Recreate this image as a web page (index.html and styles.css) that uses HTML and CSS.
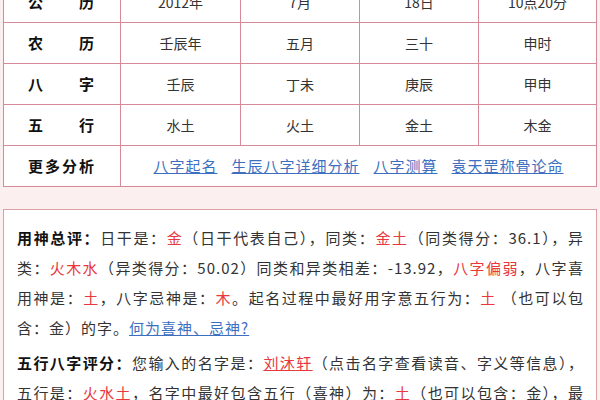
FILE: index.html
```html
<!DOCTYPE html>
<html lang="zh-CN">
<head>
<meta charset="utf-8">
<link rel="stylesheet" href="styles.css">
</head>
<body>
<div class="page">
  <table class="bazi">
    <colgroup>
      <col class="c1"><col class="c2"><col class="c3"><col class="c4"><col class="c5">
    </colgroup>
    <tr><th>公　　历</th><td>2012年</td><td>7月</td><td>18日</td><td>10点20分</td></tr>
    <tr><th>农　　历</th><td>壬辰年</td><td>五月</td><td>三十</td><td>申时</td></tr>
    <tr><th>八　　字</th><td>壬辰</td><td>丁未</td><td>庚辰</td><td>甲申</td></tr>
    <tr><th>五　　行</th><td>水土</td><td>火土</td><td>金土</td><td>木金</td></tr>
    <tr><th>更多分析</th><td colspan="4" class="links"><a href="#">八字起名</a><a href="#">生辰八字详细分析</a><a href="#">八字测算</a><a href="#">袁天罡称骨论命</a></td></tr>
  </table>

  <div class="box">
    <p><b>用神总评：</b>日干是：<span class="red">金</span>（日干代表自己），同类：<span class="red">金土</span>（同类得分：36.1），异类：<span class="red">火木水</span>（异类得分：50.02）同类和异类相差：-13.92，<span class="red">八字偏弱</span>，八字喜用神是：<span class="red">土</span>，八字忌神是：<span class="red">木</span>。起名过程中最好用字意五行为：<span class="red">土</span> （也可以包含：金）的字。<a href="#" class="blue">何为喜神、忌神?</a></p>
    <p><b>五行八字评分：</b>您输入的名字是：<a href="#" class="redlink">刘沐轩</a>（点击名字查看读音、字义等信息），五行是：<span class="red">火水土</span>，名字中最好包含五行（喜神）为：<span class="red">土</span>（也可以包含：金），最好不要包含五行（忌神）为：木。</p>
  </div>
</div>
</body>
</html>
```
FILE: styles.css
```css
html, body {
  margin: 0;
  padding: 0;
  background: #fbeff0;
  overflow: hidden;
}
body {
  font-family: "Noto Sans CJK SC", "Noto Sans", sans-serif;
  color: #333;
}
.page {
  padding: 0 4px 0 3px;
}
.bazi {
  margin-top: -19px;
  width: 593px;
  border-collapse: collapse;
  background: #fff;
  table-layout: fixed;
  border: 1px solid #d68a98;
}
.c1 { width: 117px; }
.c2 { width: 120px; }
.c3 { width: 119px; }
.c4 { width: 119px; }
.c5 { width: 118px; }
.bazi th, .bazi td {
  height: 40px;
  padding: 0;
  border: 1px solid #d68a98;
  text-align: center;
  font-size: 14px;
  line-height: 20px;
}
.bazi th {
  font-size: 15px;
  letter-spacing: 2px;
  font-weight: bold;
  color: #111;
}
.links a {
  font-size: 15px;
  letter-spacing: 1px;
  color: #3d6fc1;
  text-decoration: underline;
  margin: 0 7px;
}
.box {
  margin-top: 22px;
  width: 567px;
  background: #fff;
  border: 1px solid #d9a0a6;
  padding: 13px 12px 20px 13px;
}
.box p {
  margin: 0 0 5px;
  font-size: 15px;
  letter-spacing: 1px;
  line-height: 30px;
  text-align: justify;
}
.box b {
  color: #111;
}
.red {
  color: #e8373d;
}
.redlink {
  color: #e8373d;
  text-decoration: underline;
}
.blue {
  color: #3d6fc1;
  text-decoration: underline;
}
```
